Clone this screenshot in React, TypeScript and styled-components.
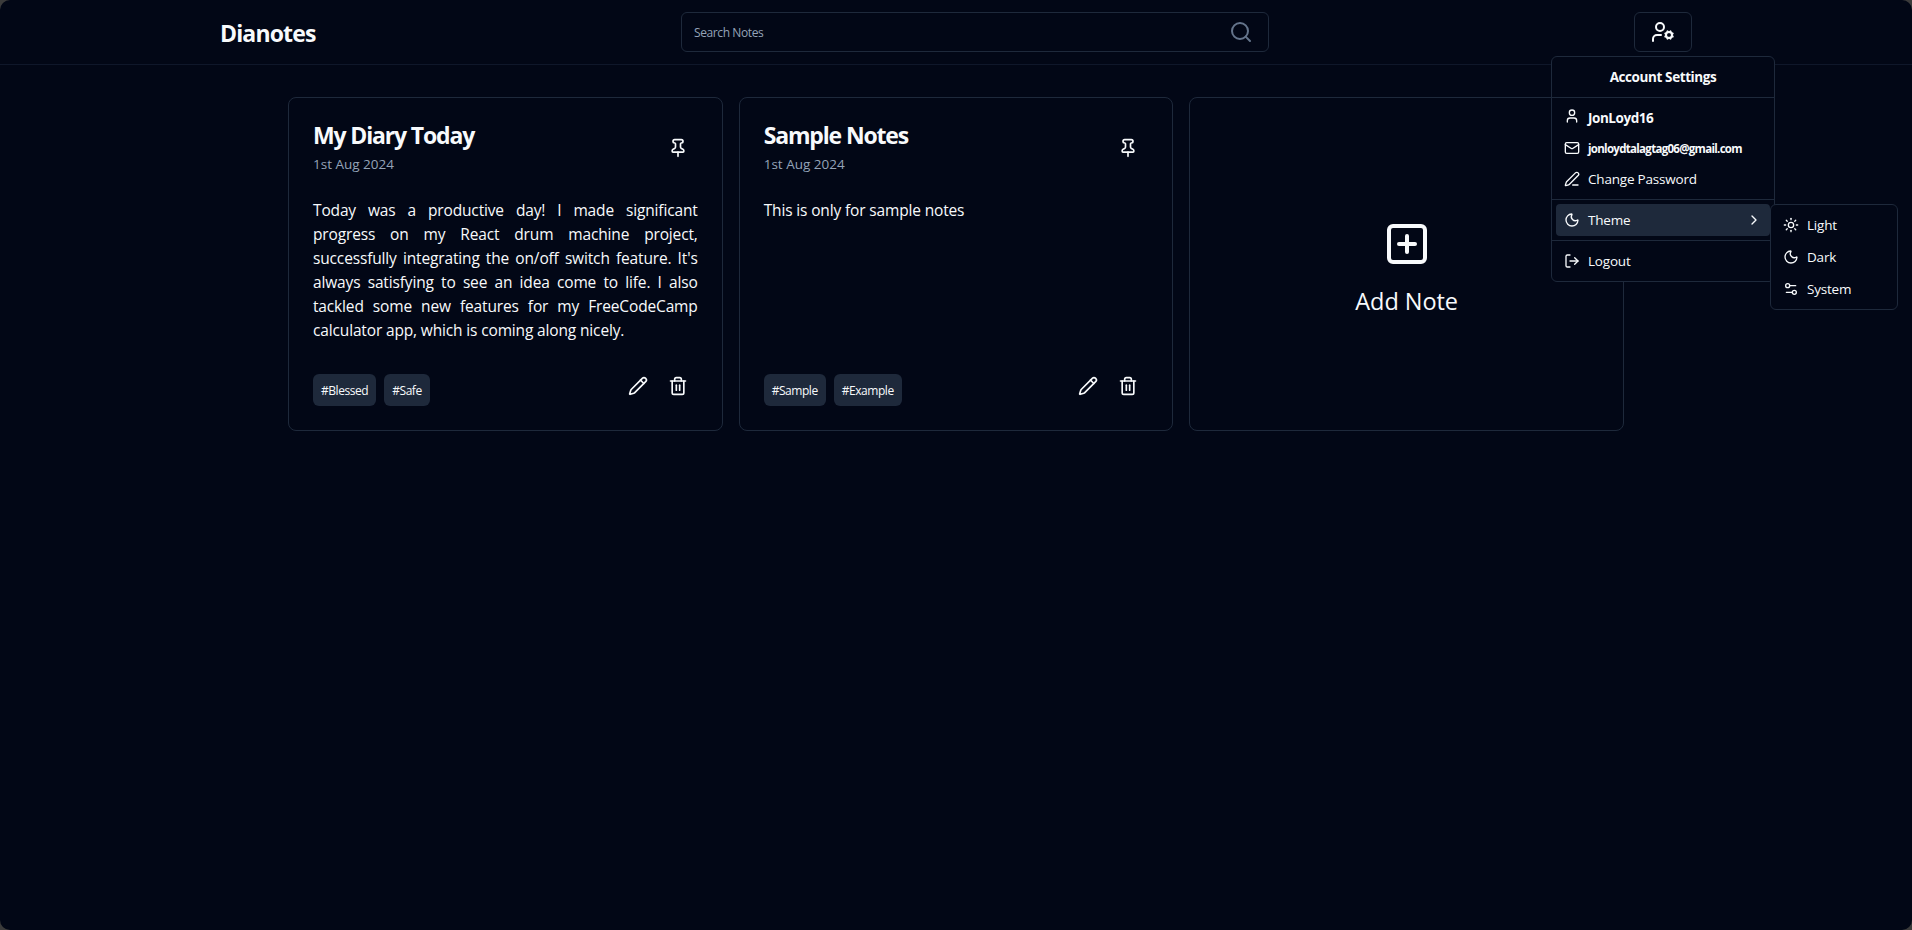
import React from "react";
import styled, { createGlobalStyle } from "styled-components";
import {
  ChevronRight,
  LogOut,
  Mail,
  Moon,
  Pencil,
  PenLine,
  Pin,
  Search,
  Settings2,
  SquarePlus,
  Sun,
  Trash2,
  User,
  UserCog,
} from "lucide-react";

const color = {
  background: "#020716",
  text: "#f8fafc",
  muted: "#94a3b8",
  subtle: "#64748b",
  border: "#1e293b",
  accent: "#1e293b",
};

const GlobalStyle = createGlobalStyle`
  *, *::before, *::after { box-sizing: border-box; }
  body {
    margin: 0;
    background: #3b3b3b;
    color: ${color.text};
    font-family: "Open Sans", "Noto Sans", sans-serif;
  }
  h1, h2, p { margin: 0; }
  button, input { font: inherit; color: inherit; background: none; }
  svg { display: block; flex-shrink: 0; }
`;

const Page = styled.div`
  min-height: 930px;
  overflow: hidden;
  border-radius: 10px;
  background: ${color.background};
`;

const Header = styled.header`
  height: 65px;
  padding: 0 220px;
  display: flex;
  align-items: center;
  justify-content: space-between;
  border-bottom: 1px solid #0f172a;
`;

const Brand = styled.h1`
  width: 96px;
  margin-top: 2px;
  font-size: 23px;
  line-height: 32px;
  font-weight: 700;
  letter-spacing: -0.85px;
  white-space: nowrap;
`;

const SearchBox = styled.label`
  width: 588px;
  height: 40px;
  padding: 0 15px 0 12px;
  display: flex;
  align-items: center;
  justify-content: space-between;
  border: 1px solid ${color.border};
  border-radius: 6px;
  color: ${color.subtle};
`;

const SearchInput = styled.input`
  flex: 1;
  padding: 0;
  border: 0;
  outline: 0;
  font-size: 12px;
  letter-spacing: -0.4px;

  &::placeholder {
    color: ${color.muted};
    opacity: 1;
  }
`;

const AccountArea = styled.div`
  position: relative;
`;

const AccountButton = styled.button`
  width: 58px;
  height: 40px;
  padding: 0;
  display: grid;
  place-items: center;
  border: 1px solid ${color.border};
  border-radius: 6px;
`;

const Menu = styled.div`
  position: absolute;
  z-index: 2;
  top: 44px;
  left: -83px;
  width: 224px;
  padding: 4px;
  border: 1px solid ${color.border};
  border-radius: 6px;
  background: ${color.background};
`;

const SubMenu = styled(Menu)`
  z-index: 3;
  top: 147px;
  left: 218px;
  width: 128px;
`;

const MenuTitle = styled.div`
  padding: 6px 8px;
  text-align: center;
  font-size: 13.5px;
  line-height: 20px;
  font-weight: 700;
  letter-spacing: -0.4px;
`;

const Separator = styled.div`
  height: 1px;
  margin: 4px -4px;
  background: ${color.border};
`;

const MenuItem = styled.div<{ $active?: boolean; $bold?: boolean; $small?: boolean }>`
  height: ${(p) => (p.$small ? 28 : 32)}px;
  margin-bottom: ${(p) => (p.$small ? 1 : 0)}px;
  padding: 0 8px;
  display: flex;
  align-items: center;
  gap: 8px;
  border-radius: 4px;
  background: ${(p) => (p.$active ? color.accent : "transparent")};
  font-size: ${(p) => (p.$small ? 11.5 : 13.5)}px;
  font-weight: ${(p) => (p.$bold ? 700 : 400)};
  letter-spacing: ${(p) => (p.$small ? -0.7 : p.$bold ? -0.45 : -0.2)}px;
  white-space: nowrap;

  svg:nth-of-type(2) { margin-left: auto; }
`;

const RaisedUser = styled(User)`
  margin-bottom: 4px;
`;

const Notes = styled.main`
  padding: 32px 288px;
  display: grid;
  grid-template-columns: repeat(3, 1fr);
  gap: 16px;
`;

const Card = styled.article`
  height: 334px;
  padding: 24px;
  display: flex;
  flex-direction: column;
  border: 1px solid ${color.border};
  border-radius: 8px;
`;

const CardHeader = styled.div`
  height: 52px;
  display: flex;
  align-items: center;
  justify-content: space-between;
`;

const CardTitle = styled.h2`
  font-size: 23px;
  line-height: 26px;
  font-weight: 700;
  letter-spacing: -1.15px;
`;

const CardDate = styled.p`
  margin-top: 6px;
  color: ${color.muted};
  font-size: 13.5px;
  line-height: 20px;
  letter-spacing: 0;
`;

const IconButton = styled.button`
  width: 40px;
  height: 40px;
  padding: 0;
  border: 0;
  display: grid;
  place-items: center;
`;

const CardText = styled.p`
  margin-top: 24px;
  font-size: 15.5px;
  line-height: 24px;
  letter-spacing: -0.15px;
  text-align: justify;
`;

const CardFooter = styled.div`
  margin-top: auto;
  display: flex;
  align-items: flex-end;
  justify-content: space-between;
`;

const Tags = styled.div`
  display: flex;
  gap: 8px;
`;

const Tag = styled.span`
  height: 32px;
  padding: 0 8px;
  border-radius: 6px;
  background: ${color.accent};
  font-size: 12px;
  line-height: 33px;
  letter-spacing: -0.45px;
`;

const Actions = styled.div`
  display: flex;
`;

const AddCard = styled(Card)`
  align-items: center;
  padding-top: 122px;
  gap: 17px;
  font-size: 23.5px;
  line-height: 32px;
  letter-spacing: -0.05px;
`;

type Note = { title: string; date: string; text: string; tags: string[] };

const notes: Note[] = [
  {
    title: "My Diary Today",
    date: "1st Aug 2024",
    text: "Today was a productive day! I made significant progress on my React drum machine project, successfully integrating the on/off switch feature. It's always satisfying to see an idea come to life. I also tackled some new features for my FreeCodeCamp calculator app, which is coming along nicely.",
    tags: ["#Blessed", "#Safe"],
  },
  {
    title: "Sample Notes",
    date: "1st Aug 2024",
    text: "This is only for sample notes",
    tags: ["#Sample", "#Example"],
  },
];

function AccountMenu() {
  return (
    <Menu>
      <MenuTitle>Account Settings</MenuTitle>
      <Separator />
      <MenuItem $bold><RaisedUser size={16} />JonLoyd16</MenuItem>
      <MenuItem $bold $small><Mail size={16} />jonloydtalagtag06@gmail.com</MenuItem>
      <MenuItem><PenLine size={16} />Change Password</MenuItem>
      <Separator />
      <MenuItem $active><Moon size={16} />Theme<ChevronRight size={16} /></MenuItem>
      <Separator />
      <MenuItem><LogOut size={16} />Logout</MenuItem>
      <SubMenu>
        <MenuItem><Sun size={16} />Light</MenuItem>
        <MenuItem><Moon size={16} />Dark</MenuItem>
        <MenuItem><Settings2 size={16} />System</MenuItem>
      </SubMenu>
    </Menu>
  );
}

function NoteCard({ note }: { note: Note }) {
  return (
    <Card>
      <CardHeader>
        <div>
          <CardTitle>{note.title}</CardTitle>
          <CardDate>{note.date}</CardDate>
        </div>
        <IconButton aria-label="Pin note"><Pin size={20} /></IconButton>
      </CardHeader>
      <CardText>{note.text}</CardText>
      <CardFooter>
        <Tags>{note.tags.map((tag) => <Tag key={tag}>{tag}</Tag>)}</Tags>
        <Actions>
          <IconButton aria-label="Edit note"><Pencil size={20} /></IconButton>
          <IconButton aria-label="Delete note"><Trash2 size={20} /></IconButton>
        </Actions>
      </CardFooter>
    </Card>
  );
}

export default function App() {
  return (
    <>
      <GlobalStyle />
      <Page>
        <Header>
          <Brand>Dianotes</Brand>
          <SearchBox>
            <SearchInput placeholder="Search Notes" />
            <Search size={24} />
          </SearchBox>
          <AccountArea>
            <AccountButton aria-label="Account settings"><UserCog size={24} /></AccountButton>
            <AccountMenu />
          </AccountArea>
        </Header>
        <Notes>
          {notes.map((note) => <NoteCard key={note.title} note={note} />)}
          <AddCard>
            <SquarePlus size={48} />
            Add Note
          </AddCard>
        </Notes>
      </Page>
    </>
  );
}
